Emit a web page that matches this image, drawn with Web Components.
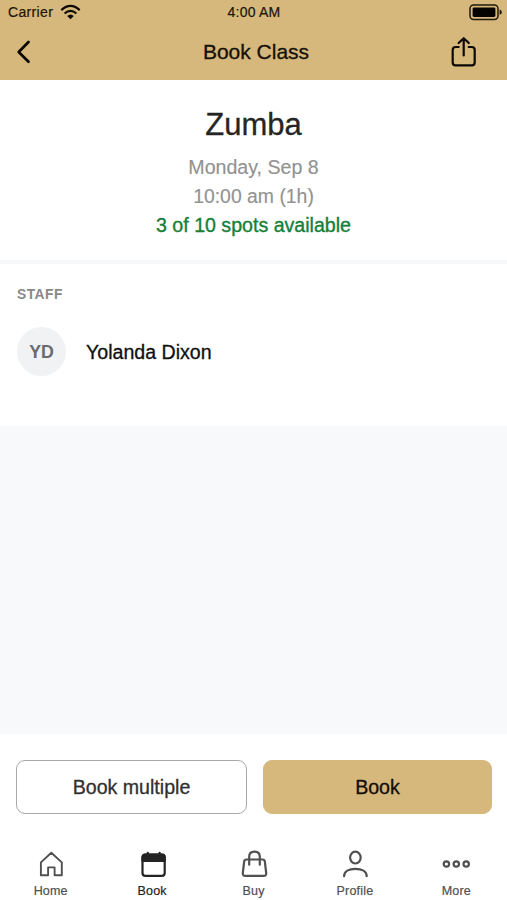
<!DOCTYPE html>
<html lang="en">
<head>
<meta charset="utf-8">
<title>Book Class</title>
<style>
html,body{margin:0;height:100%;background:#fff}
body{font-family:"Liberation Sans",Arial,sans-serif;color:#111}
</style>
</head>
<body>
<booking-app></booking-app>
<script>
function define(name, html) {
  const t = document.createElement('template');
  t.innerHTML = html;
  customElements.define(name, class extends HTMLElement {
    constructor() {
      super();
      this.attachShadow({ mode: 'open' }).append(t.content.cloneNode(true));
    }
  });
}

define('status-bar', `
<style>
:host{display:grid;grid-template-columns:1fr auto 1fr;align-items:center;height:24px;padding:0 4px 0 8px;font-size:14px;line-height:24px;color:#1a140a;letter-spacing:.2px;-webkit-text-stroke:.2px}
.l{display:flex;align-items:center;gap:7px;letter-spacing:.35px}
.r{display:flex;justify-content:flex-end}
.t{padding-right:3px}
svg{display:block}
</style>
<div class="l"><span>Carrier</span><svg width="21" height="16" viewBox="0 0 21 16" fill="none" stroke="#0c0905" stroke-width="2.1"><path d="M1.3 6.1Q10.5-2.2 19.7 6.1M4.6 9.6Q10.5 4.2 16.4 9.6"/><path d="M7.2 12.1Q10.5 9.1 13.8 12.1L10.5 15.2Z" fill="#0c0905" stroke="none"/></svg></div>
<span class="t">4:00 AM</span>
<div class="r"><svg width="34" height="17" viewBox="0 0 34 17"><rect x="1" y="1" width="28" height="14.4" rx="3.6" fill="none" stroke="#20180c" stroke-width="1.5"/><rect x="3.6" y="3.5" width="22.8" height="9.4" rx="1.4" fill="#050402"/><path d="M30.6 5.6Q32.8 6.2 32.8 8.2T30.6 10.8Z" fill="#20180c"/></svg></div>`);

define('nav-bar', `
<style>
:host{display:grid;grid-template-columns:1fr auto 1fr;align-items:center;height:56px;padding:0 29px 0 16px}
h1{margin:0 0 0 18px;font-size:21px;font-weight:400;line-height:24px;color:#14100a;-webkit-text-stroke:.3px}
svg{display:block}
.r{justify-self:end}
</style>
<svg width="16" height="24" viewBox="0 0 16 24" fill="none" stroke="#0c0905" stroke-width="2.7" stroke-linecap="round" stroke-linejoin="round"><path d="M12.5 2L2.7 12 12.5 21.8"/></svg>
<h1>Book Class</h1>
<svg class="r" width="28" height="32" viewBox="0 0 28 32" fill="none" stroke="#0c0905" stroke-width="2.2" stroke-linecap="round" stroke-linejoin="round"><path d="M8.7 11H5.6Q2.7 11 2.7 13.9V26.4Q2.7 29.3 5.6 29.3H21.8Q24.7 29.3 24.7 26.4V13.9Q24.7 11 21.8 11H18.7M13.7 19.5V2.8M8.6 7L13.7 2.2 18.8 7"/></svg>`);

define('class-summary', `
<style>
:host{display:block;height:180px;box-sizing:border-box;padding-top:25px;text-align:center;font-size:19.6px;line-height:29px;color:#929292;background:#fff;-webkit-text-stroke:.15px}
h2{margin:0 0 9px;font-size:31px;font-weight:400;line-height:39px;color:#252525;-webkit-text-stroke:.3px}
.open{color:#158038;-webkit-text-stroke:.35px}
.time{font-size:19.4px}
</style>
<h2><slot name="title"></slot></h2>
<div><slot name="date"></slot></div><div class="time"><slot name="time"></slot></div><div class="open"><slot name="spots"></slot></div>`);

define('staff-section', `
<style>
:host{display:block;box-sizing:border-box;height:166px;border-top:4px solid #f7f8f9;padding:22px 17px 0;background:#fff}
h3{margin:0;font-size:13.8px;line-height:18px;letter-spacing:.5px;color:#898989}
.row{display:flex;align-items:center;gap:20px;margin-top:23px}
.avatar{width:49px;height:49px;box-sizing:border-box;padding-top:2px;border-radius:50%;background:#f0f2f4;color:#696b70;display:grid;place-items:center;font-size:17.8px;font-weight:700}
.name{font-size:19.6px;line-height:24px;color:#101010;-webkit-text-stroke:.3px}
</style>
<h3>STAFF</h3>
<div class="row"><div class="avatar"><slot name="initials"></slot></div><div class="name"><slot></slot></div></div>`);

define('action-button', `
<style>
:host{display:flex;align-items:center;justify-content:center;box-sizing:border-box;height:54px;border:1.4px solid #a9a9a9;border-radius:9px;background:#fff;font-size:19.6px;color:#303030;-webkit-text-stroke:.3px}
:host([primary]){background:#d6b77c;border-color:#d6b77c;color:#120e07}
</style><slot></slot>`);

define('tab-item', `
<style>
:host{flex:1;display:flex;flex-direction:column;align-items:center;gap:2px;font-size:12.5px;line-height:18px;letter-spacing:.2px;color:#505050;-webkit-text-stroke:.2px}
:host([active]){color:#242424}
::slotted(svg){display:block;flex:none;width:30px;height:30px;fill:none;stroke:currentColor;stroke-width:2.2;stroke-linecap:round;stroke-linejoin:round}
</style><slot name="icon"></slot><span><slot></slot></span>`);

define('booking-app', `
<style>
:host{display:flex;flex-direction:column;height:900px;overflow:hidden}
header{background:#d6b77c;height:80px}
.space{flex:1;background:#f7f9fb}
.actions{height:106px;box-sizing:border-box;display:grid;grid-template-columns:231px 229px;gap:16px;padding:26px 15px 0 16px;background:#fff}
nav{display:flex;height:60px;padding-top:10px;box-sizing:border-box;background:#fff}
</style>
<header><status-bar></status-bar><nav-bar></nav-bar></header>
<class-summary><span slot="title">Zumba</span><span slot="date">Monday, Sep 8</span><span slot="time">10:00 am (1h)</span><span slot="spots">3 of 10 spots available</span></class-summary>
<staff-section><span slot="initials">YD</span>Yolanda Dixon</staff-section>
<div class="space"></div>
<div class="actions"><action-button>Book multiple</action-button><action-button primary>Book</action-button></div>
<nav>
<tab-item><svg slot="icon" viewBox="0 0 30 30"><path d="M4.9 12.4L15.3 2.8 25.8 12.4V25.2H18.6V17.4H12.1V25.2H4.9Z" style="stroke-width:1.9"/></svg>Home</tab-item>
<tab-item active><svg slot="icon" viewBox="0 0 30 30"><rect x="5.5" y="4.7" width="22.2" height="21.2" rx="2.8"/><path d="M5.5 11V7.5Q5.5 4.7 8.3 4.7H24.9Q27.7 4.7 27.7 7.5V11Z" fill="currentColor"/><path d="M10.8 2.8V5M22.6 2.8V5"/></svg>Book</tab-item>
<tab-item><svg slot="icon" viewBox="0 0 30 30"><path d="M7.4 9.5H23.6Q25.5 9.5 25.8 11.4L27.2 23Q27.4 25.9 24.6 25.9H6.4Q3.6 25.9 3.8 23L5.2 11.4Q5.5 9.5 7.4 9.5ZM10.2 14.7V6.7Q10.2 1.6 15.5 1.6T20.8 6.7V14.7"/></svg>Buy</tab-item>
<tab-item><svg slot="icon" viewBox="0 0 30 30"><ellipse cx="15.4" cy="7.6" rx="5.3" ry="5.9"/><path d="M4.1 26.2C4.1 21.3 9 18.8 15.4 18.8S26.7 21.3 26.7 26.2"/></svg>Profile</tab-item>
<tab-item><svg slot="icon" viewBox="0 0 30 30"><circle cx="5.4" cy="14" r="2.7"/><circle cx="15.3" cy="14" r="2.7"/><circle cx="25.2" cy="14" r="2.7"/></svg>More</tab-item>
</nav>`);
</script>
</body>
</html>
